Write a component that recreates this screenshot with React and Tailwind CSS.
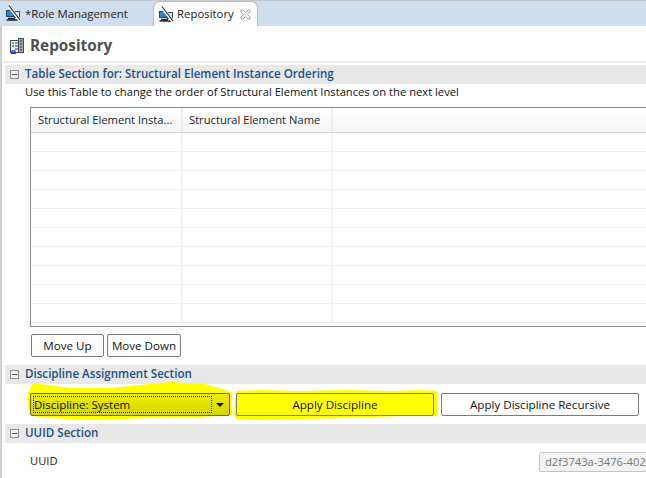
const font = { fontFamily: '"Open Sans", "Noto Sans", sans-serif' };

function NoConnIcon() {
  return (
    <svg width="16" height="17" viewBox="0 0 16 17" className="shrink-0">
      <rect x="1.500" y="5.500" width="7" height="6" fill="#2a86d0" stroke="#17466e" />
      <rect x="9.500" y="6.500" width="5" height="6" fill="#d4e2ee" stroke="#3c4a58" />
      <path d="M3 13.500h7M1.500 15h12" stroke="#2a2f34" strokeWidth="1.700" />
      <path d="M4 1.500l11 14" stroke="#fff" strokeWidth="3" />
      <path d="M4 0.500l11 14.500" stroke="#2a2a2a" strokeWidth="1.200" />
    </svg>
  );
}

function RepoIcon() {
  return (
    <svg width="14" height="16" viewBox="0 0 14 16" className="shrink-0">
      <rect x="0.500" y="2.500" width="8" height="12" fill="#f2f4f4" stroke="#404a50" />
      <rect x="8.500" y="0.500" width="5" height="14" fill="#a0a8ac" stroke="#404a50" />
      <path d="M2 5h2M2 8h2" stroke="#20a040" strokeWidth="1.500" />
      <path d="M5 5h3M5 8h3M5 11h3M10 3h2M10 6h2M10 9h2M10 12h2" stroke="#303840" />
      <path d="M1 13h5M1 15.500h5M2 12v4M4.500 12v4" stroke="#2040e0" />
    </svg>
  );
}

function Collapse() {
  return (
    <span className="w-[9px] h-[9px] border border-[#909090] bg-[#f4f4f4] flex items-center justify-center shrink-0">
      <span className="w-[5px] h-px bg-[#505050]" />
    </span>
  );
}

function SectionHeader({ title }) {
  return (
    <div className="ml-[2px] h-[19px] bg-[#e8e8e8] flex items-center pl-[5px] gap-[6px] shrink-0">
      <Collapse />
      <span className="text-[11.600px] font-semibold text-[#1c4f85] leading-none relative top-[-1px] whitespace-nowrap">{title}</span>
    </div>
  );
}

function Btn({ children, className = "" }) {
  return (
    <button className={"h-[23px] border border-[#7a7a7a] rounded-[2px] text-[11.600px] text-[#111] flex items-center justify-center pt-[1px] cursor-default whitespace-nowrap " + className}>
      {children}
    </button>
  );
}

function Row() {
  return (
    <div className="flex h-[19px] border-b border-[#f0f0f0] shrink-0">
      <div className="w-[152px] border-r-2 border-[#f0f2f6]" />
      <div className="w-[150px] border-r-2 border-[#f0f2f6]" />
      <div className="flex-1" />
    </div>
  );
}

export default function App() {
  return (
    <div className="w-[646px] h-[478px] overflow-hidden bg-white relative flex flex-col" style={font}>
      <div className="h-[26px] bg-[#cfdeee] flex items-end border-t border-[#c4c8cc] shrink-0">
        <div className="w-[153px] h-[25px] flex items-center pl-[5px] gap-[4px] text-[11.400px] text-[#222]">
          <NoConnIcon />
          <span>*Role Management</span>
        </div>
        <div className="w-[105px] h-[25px] bg-white border border-b-0 border-[#b8bcc0] rounded-t-[7px] flex items-center pl-[4px] gap-[3px] text-[11.400px] text-[#222]">
          <NoConnIcon />
          <span>Repository</span>
          <svg width="11" height="11" viewBox="0 0 11 11" className="ml-[3px]">
            <path d="M1 1h2l2.500 2.500L8 1h2v2L7.500 5.500 10 8v2H8L5.500 7.500 3 10H1V8l2.500-2.500L1 3z" fill="#f6f6f6" stroke="#a4a4a4" />
          </svg>
        </div>
      </div>

      <div className="flex-1 border-l-2 border-[#d0d0d0] flex flex-col min-h-0 pl-[1px]">
        <div className="h-[37px] flex items-center pl-[7px] pt-[4px] gap-[6px] shrink-0 border-b-2 border-[#ececec]">
          <RepoIcon />
          <span className="text-[15.300px] font-bold text-[#505050]">Repository</span>
        </div>
        <div className="h-[2px] shrink-0" />
        <SectionHeader title="Table Section for: Structural Element Instance Ordering" />
        <div className="ml-[22px] h-[16px] text-[11.200px] text-[#111] leading-[16px] whitespace-nowrap shrink-0">
          Use this Table to change the order of Structural Element Instances on the next level
        </div>
        <div className="ml-[27px] mt-[7px] h-[220px] border border-[#8a8a90] border-r-0 flex flex-col overflow-hidden shrink-0">
          <div className="flex h-[25px] bg-gradient-to-b from-white to-[#f4f5f7] border-b border-[#d4d6da] text-[11.200px] text-[#222] shrink-0 whitespace-nowrap">
            <div className="w-[152px] border-r-2 border-[#eceef2] pl-[7px] leading-[24px]">Structural Element Insta...</div>
            <div className="w-[150px] border-r-2 border-[#eceef2] pl-[6px] leading-[24px]">Structural Element Name</div>
            <div className="flex-1" />
          </div>
          {Array.from({ length: 10 }).map((_, i) => <Row key={i} />)}
        </div>
        <div className="ml-[28px] mt-[7px] flex gap-[3px] shrink-0">
          <Btn className="w-[73px]">Move Up</Btn>
          <Btn className="w-[74px]">Move Down</Btn>
        </div>
        <div className="h-[8px] shrink-0" />
        <SectionHeader title="Discipline Assignment Section" />
        <div className="relative h-[40px] shrink-0">
          <svg width="646" height="40" className="absolute left-[-3px] top-0 overflow-visible">
            <path d="M33 -1L70 4 110 4 170 -2 205 0 226 6 232 9V31L200 33 150 34 90 36 50 34 33 32 28 24V9z" fill="#ffff00" />
            <path d="M236 7L262 6 300 7 345 6 395 7 420 6 437 7 438 32L400 32 350 34 300 35 260 36 236 35 234 30z" fill="#ffff00" />
          </svg>
          <div className="absolute left-[27px] top-[9px] flex">
            <div className="w-[200px] h-[23px] border border-[#6a6a20] rounded-[2px] bg-gradient-to-b from-[#eded00] to-[#d4d400] flex items-center p-[2px]">
              <div className="flex-1 h-full border border-dotted border-[#333] flex items-center text-[11.500px] text-[#111]">
                Discipline: System
              </div>
              <span className="w-[15px] flex justify-center">
                <span className="w-0 h-0 border-l-[4px] border-r-[4px] border-t-[4px] border-l-transparent border-r-transparent border-t-[#111]" />
              </span>
            </div>
            <Btn className="w-[198px] ml-[6px] border-[#6a6a20]">Apply Discipline</Btn>
            <Btn className="w-[198px] ml-[7px] bg-white">Apply Discipline Recursive</Btn>
          </div>
        </div>
        <SectionHeader title="UUID Section" />
        <div className="relative flex-1 min-h-0">
          <span className="absolute left-[27px] top-[10px] text-[11.200px] text-[#222]">UUID</span>
          <div className="absolute left-[536px] top-[9px] w-[130px] h-[20px] border border-[#c4c4c4] rounded-[2px] bg-[#f2f2f2] text-[11.200px] text-[#777] pl-[5px] leading-[18px] whitespace-nowrap overflow-hidden">
            d2f3743a-3476-402c-8b1a
          </div>
        </div>
      </div>
    </div>
  );
}
